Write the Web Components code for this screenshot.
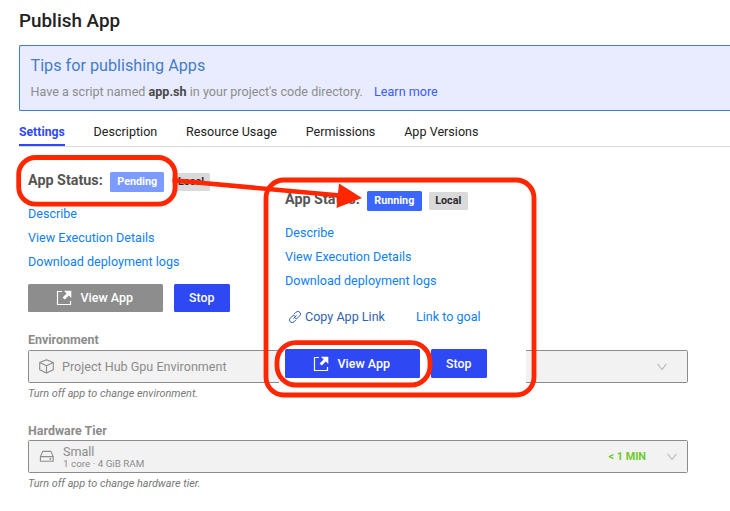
<!DOCTYPE html>
<html lang="en">
<head>
<meta charset="utf-8">
<title>Publish App</title>
<style>
html,body{margin:0;background:#fff}
body{width:730px;height:511px;overflow:hidden;font:12.57px/24px Roboto,"Liberation Sans",sans-serif;color:#2e2e38}
</style>
</head>
<body>
<publish-page></publish-page>
<script>
function define(name, html) {
  const tpl = document.createElement('template');
  tpl.innerHTML = html;
  customElements.define(name, class extends HTMLElement {
    constructor() {
      super();
      this.attachShadow({mode: 'open'}).appendChild(tpl.content.cloneNode(true));
    }
  });
}

define('tips-box', `<style>
:host{display:block;box-sizing:border-box;height:66px;border:1px solid #447cca;border-right:0;border-radius:2px 0 0 2px;background:#e9ecff;padding:9px 0 0 10.5px;color:#8c8c8c;white-space:nowrap}
h2{margin:0;font-weight:400;font-size:16.2px;line-height:22px;color:#447cca}
p{margin:4px 0 0;line-height:22px;letter-spacing:.015px}
::slotted(b){color:#494949;font-weight:700}
::slotted(a){color:#3b5bfd;margin-left:8px}
</style><h2>Tips for publishing Apps</h2><p><slot></slot></p>`);

define('tab-bar', `<style>
:host{display:flex;gap:28.8px;height:36px;box-sizing:border-box;border-bottom:1px solid #d9d9d9;color:#222}
</style><slot></slot>`);

define('tab-item', `<style>
:host{display:block;height:35px;line-height:41px;box-sizing:border-box;white-space:nowrap;letter-spacing:.015px}
:host([active]){color:#2e49f4;font-weight:700;font-size:12.2px;line-height:42px;border-bottom:2px solid #2e49f4}
</style><slot></slot>`);

define('status-badge', `<style>
:host{display:block;box-sizing:border-box;height:20px;line-height:20px;padding:0 7.3px;border-radius:1.5px;font-size:10.77px;font-weight:700;color:#fff;background:#3b66ff}
:host([pending]){background:#7b9bff}
:host([local]){height:18px;line-height:18px;padding:0 6.4px;background:#dadada;color:#2b2b2b}
</style><slot></slot>`);

define('app-status', `<style>
:host{display:block;color:#0f80f6}
.row{display:flex;align-items:center;height:24px;gap:7.2px;margin-bottom:8px;white-space:nowrap}
.label{font-size:14.35px;font-weight:700;color:#555;margin-top:-2px}
.link{display:block;height:24px}
</style><div class="row"><span class="label">App Status:</span><slot></slot></div>
<span class="link">Describe</span><span class="link">View Execution Details</span><span class="link">Download deployment logs</span>`);

define('app-button', `<style>
:host{display:flex;align-items:center;justify-content:center;box-sizing:border-box;height:28px;width:56px;border-radius:1.5px;background:#2e49f4;color:#fff;font-weight:500;font-size:12.5px}
:host([stop]){font-size:12.3px;padding-right:.6px}
:host([view]){width:135px;padding-right:1.5px}
:host([disabled]){background:#8d8d8d}
svg{display:none;margin-right:8px}
:host([view]) svg{display:block}
</style><svg width="16" height="16" viewBox="0 0 16 16"><path d="M6 1.5H1.5V14.5H14.5V11" fill="none" stroke="currentColor" stroke-width="1.2"/><path d="M8 .8H15.3V8L12.8 5.6L8.8 9.6L6.6 7.4L10.6 3.4Z" fill="currentColor"/></svg><slot></slot>`);

define('field-select', `<style>
:host{display:block;width:660px;color:#8c8c8c}
.title{font-weight:700;height:20px;line-height:20px;font-size:12.45px}
:host(:not([env])) .title{line-height:21px}
.box{box-sizing:border-box;height:33px;border:1px solid #8c8c8c;border-radius:1.5px;background:#f2f2f2;display:flex;align-items:center;padding:0 10px 0 9px}
.icon{display:flex;width:17px;height:17px;margin-right:7px}
.val{flex:1}
.chev{margin-left:21px}
:host([env]) .chev{margin-right:10px}
.help{font-style:italic;font-size:10.87px;line-height:20px;height:20px;margin-top:1px;color:#777}
</style><div class="title"><slot name="title"></slot></div>
<div class="box"><div class="icon"><slot name="icon"></slot></div><div class="val"><slot></slot></div><slot name="extra"></slot>
<svg class="chev" width="10" height="8" viewBox="0 0 10 8"><path d="M.6 .9L5 6.5L9.4 .9" fill="none" stroke="#bcbcbc" stroke-width="1.2"/></svg></div>
<div class="help"><slot name="help"></slot></div>`);

define('hardware-value', `<style>
:host{display:block;line-height:13px;padding:2px 0 0 1px}
small{display:block;font-size:9.85px;line-height:12px}
</style><slot></slot><small>1 core · 4 GiB RAM</small>`);

define('running-card', `<style>
:host{display:block;position:absolute;left:279px;top:184px;width:247px;height:205px;box-sizing:border-box;padding:5px 0 0 6px;background:#fff}
.links{display:flex;align-items:center;height:24px;margin-top:12px;color:#0f80f6}
.copy{display:flex;align-items:center;width:131px;color:#2f62ab}
.copy svg{margin:0 4px 1px 4px}
.buttons{display:flex;gap:11px;margin-top:20px}
.buttons app-button{height:29px}
</style><app-status><status-badge>Running</status-badge><status-badge local>Local</status-badge></app-status>
<div class="links"><span class="copy"><svg width="12" height="12" viewBox="0 0 12 12" fill="none" stroke="currentColor" stroke-width="1" stroke-linecap="round"><path d="M5.1 3.1L7 1.2A2.3 2.3 0 0 1 10.7 4.9L8.8 6.8Q7.3 8.1 5.9 7.1"/><path d="M6.9 8.9L5 10.8A2.3 2.3 0 0 1 1.3 7.1L3.2 5.2Q4.7 3.9 6.1 4.9"/><path d="M4.7 7.3L7.3 4.7"/></svg>Copy App Link</span><span>Link to goal</span></div>
<div class="buttons"><app-button view>View App</app-button><app-button stop>Stop</app-button></div>`);

define('red-marks', `<style>
:host{display:block;position:absolute;inset:0}
svg{display:block}
</style><svg width="730" height="511" viewBox="0 0 730 511" fill="none" stroke="#ff2600" stroke-width="4.8">
<rect x="18.7" y="157.5" width="156.5" height="46.7" rx="17"/>
<rect x="266" y="180" width="268" height="215" rx="18"/>
<rect x="277" y="342.7" width="153" height="42.3" rx="19"/>
<path d="M172.5 180.2L340 195.6" stroke-width="4.5"/><path d="M339 183.5L362 198L336.5 208Z" fill="#ff2600" stroke="none"/></svg>`);

define('publish-page', `<style>
:host{display:block;position:relative;width:730px;height:511px;overflow:hidden}
h1{margin:0;padding:9px 0 0 19px;height:36px;font-size:18.85px;font-weight:500;line-height:24px;color:#222}
tips-box,tab-bar{margin-left:19px}
main{padding:23px 0 0 28px;display:flex;flex-direction:column}
.buttons{display:flex;gap:11px;margin:10px 0 18px}
field-select+field-select{margin-top:16px}
.min{color:#6fcb2c;font-weight:700;font-size:10.85px}
</style><h1>Publish App</h1>
<tips-box>Have a script named <b>app.sh</b> in your project's code directory. <a>Learn more</a></tips-box>
<tab-bar><tab-item active>Settings</tab-item><tab-item>Description</tab-item><tab-item>Resource Usage</tab-item><tab-item>Permissions</tab-item><tab-item>App Versions</tab-item></tab-bar>
<main><app-status><status-badge pending>Pending</status-badge><status-badge local>Local</status-badge></app-status>
<div class="buttons"><app-button view disabled>View App</app-button><app-button stop>Stop</app-button></div>
<field-select env><span slot="title">Environment</span><svg slot="icon" width="17" height="17" viewBox="0 0 17 17" fill="none" stroke="#8c8c8c" stroke-width="1.1" stroke-linejoin="round"><path d="M8.5 1.7L15.3 4.6V11.8L8.5 15.1L1.7 11.8V4.6ZM1.7 4.6L8.5 7.7L15.3 4.6M8.5 7.7V15.1"/></svg>Project Hub Gpu Environment<span slot="help">Turn off app to change environment.</span></field-select>
<field-select><span slot="title">Hardware Tier</span><svg slot="icon" width="17" height="17" viewBox="0 0 17 17" fill="none" stroke="#8c8c8c" stroke-width="1.1" stroke-linejoin="round"><path d="M2.4 8.6L4.7 3.4H12.9L15.2 8.6V13.2H2.4ZM2.4 8.6H15.2"/><circle cx="12.3" cy="11" r=".9" fill="#8c8c8c" stroke="none"/></svg><hardware-value>Small</hardware-value><span slot="extra" class="min">&lt; 1 MIN</span><span slot="help">Turn off app to change hardware tier.</span></field-select>
</main><running-card></running-card><red-marks></red-marks>`);
</script>
</body>
</html>
